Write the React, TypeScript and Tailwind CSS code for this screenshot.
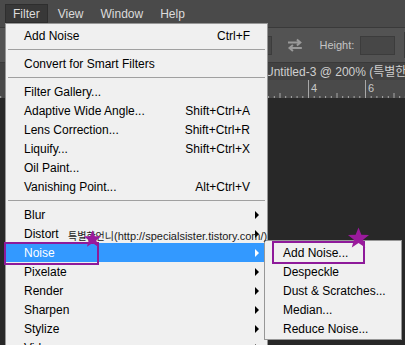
import React from "react";

type Item =
  | { sep: true }
  | { label: string; shortcut?: string; arrow?: boolean; hl?: boolean };

const mainItems: Item[] = [
  { label: "Add Noise", shortcut: "Ctrl+F" },
  { sep: true },
  { label: "Convert for Smart Filters" },
  { sep: true },
  { label: "Filter Gallery..." },
  { label: "Adaptive Wide Angle...", shortcut: "Shift+Ctrl+A" },
  { label: "Lens Correction...", shortcut: "Shift+Ctrl+R" },
  { label: "Liquify...", shortcut: "Shift+Ctrl+X" },
  { label: "Oil Paint..." },
  { label: "Vanishing Point...", shortcut: "Alt+Ctrl+V" },
  { sep: true },
  { label: "Blur", arrow: true },
  { label: "Distort", arrow: true },
  { label: "Noise", arrow: true, hl: true },
  { label: "Pixelate", arrow: true },
  { label: "Render", arrow: true },
  { label: "Sharpen", arrow: true },
  { label: "Stylize", arrow: true },
  { label: "Video", arrow: true },
];

const subItems = ["Add Noise...", "Despeckle", "Dust & Scratches...", "Median...", "Reduce Noise..."];

function Star({ size }: { size: number }) {
  return (
    <svg width={size} height={size} viewBox="0 0 24 24" className="blur-[0.4px]">
      <polygon
        points="12,1.5 15,9 23,9.3 16.8,14.3 19,22.5 12,17.8 5,22.5 7.2,14.3 1,9.3 9,9"
        fill="#9a1a9c"
      />
    </svg>
  );
}

function Ruler() {
  const ticks: React.ReactNode[] = [];
  const unit = 5.7;
  for (let i = -60; i < 30; i++) {
    const x = 308 + i * unit;
    if (x < 0 || x > 405) continue;
    const m = ((i % 10) + 10) % 10;
    let h = 2;
    if (m === 0) h = 18;
    else if (m === 5) h = 5;
    ticks.push(<line key={i} x1={x + 0.5} x2={x + 0.5} y1={18 - h} y2={18} stroke="#a8a8a8" strokeWidth={1} />);
  }
  return (
    <svg width={405} height={18} className="block">
      {ticks}
      <text x={311} y={12} fontSize={11} fill="#c8c8c8" fontFamily="Liberation Sans, sans-serif">4</text>
      <text x={368} y={12} fontSize={11} fill="#c8c8c8" fontFamily="Liberation Sans, sans-serif">6</text>
    </svg>
  );
}

export default function App() {
  return (
    <div className="relative w-[405px] h-[345px] overflow-hidden bg-[#282828] font-['Liberation_Sans','Noto_Sans_CJK_KR',sans-serif] text-[12px]">
      {/* Background application */}
      <div className="flex flex-col">
        {/* menubar */}
        <div className="h-[28px] bg-[#4a4a4a] flex pl-[5px] pt-[4px] gap-[3px] text-[#dcdcdc] border-b border-[#3a3a3a]">
          <div className="h-[19px] px-[7px] flex items-center bg-[#383838] border border-[#2e2e2e]">Filter</div>
          <div className="h-[19px] px-[7px] flex items-center">View</div>
          <div className="h-[19px] px-[7px] flex items-center">Window</div>
          <div className="h-[19px] px-[7px] flex items-center">Help</div>
        </div>
        {/* options bar */}
        <div className="h-[35px] bg-[#535353] flex items-center border-b border-[#3a3a3a]">
          <div className="ml-[230px] w-[42px] h-[19px] bg-[#474747] border border-[#3c3c3c]" />
          <svg width="16" height="14" viewBox="0 0 16 14" className="ml-[15px]">
            <path d="M1 4.5 H13 M10 1.5 L13.5 4.5 L10 7.5" stroke="#9a9a9a" strokeWidth="2" fill="none" />
            <path d="M15 10 H3 M6 7 L2.5 10 L6 13" stroke="#9a9a9a" strokeWidth="2" fill="none" />
          </svg>
          <span className="ml-[17px] text-[11px] text-[#c4c4c4]">Height:</span>
          <div className="ml-[6px] w-[35px] h-[19px] bg-[#474747] border border-[#3c3c3c]" />
          <div className="ml-[9px] w-px h-[26px] bg-[#3a3a3a]" />
        </div>
        {/* document tab */}
        <div className="h-[17px] bg-[#424242] flex items-center pl-[265px] text-[#cfcfcf] whitespace-nowrap">
          Untitled-3 @ 200% (특별한
        </div>
        {/* ruler */}
        <div className="h-[18px] bg-[#4a4a4a]">
          <Ruler />
        </div>
        <div className="flex-1 bg-[#282828]" />
      </div>

      {/* Main dropdown menu */}
      <div className="absolute left-[5px] top-[23px] w-[263px] h-[340px] bg-[#f0f0f0] border border-[#979797] pt-[2px] text-black">
        {mainItems.map((it, i) =>
          "sep" in it ? (
            <div key={i} className="h-[9px] flex items-center mx-[2px]">
              <div className="w-full h-px bg-[#a0a0a0]" />
            </div>
          ) : (
            <div
              key={i}
              className={
                "relative h-[19px] flex items-center pl-[18px] pr-[17px] " +
                (it.hl ? "bg-[#3399ff] text-white" : "")
              }
            >
              <span className="flex-1 whitespace-nowrap">{it.label}</span>
              {it.shortcut && <span className="whitespace-nowrap">{it.shortcut}</span>}
              {it.arrow && (
                <span
                  className={
                    "absolute right-[8px] top-[6px] w-0 h-0 border-y-[4px] border-y-transparent border-l-[4px] " +
                    (it.hl ? "border-l-white" : "border-l-black")
                  }
                />
              )}
            </div>
          )
        )}
      </div>

      {/* Submenu */}
      <div className="absolute left-[264px] top-[240px] w-[138px] bg-[#f0f0f0] border border-[#979797] pt-[2px] pb-px text-black">
        {subItems.map((s) => (
          <div key={s} className="h-[19px] flex items-center pl-[18px] whitespace-nowrap">
            {s}
          </div>
        ))}
      </div>

      {/* Watermark */}
      <div className="absolute left-[68px] top-[229px] text-[11px] text-[#1a1a1a] whitespace-nowrap leading-[14px]">
        <span className="text-[10px] font-['Noto_Sans_CJK_KR',sans-serif]">특별한언니</span>(http://specialsister.tistory.com/)
      </div>

      {/* Annotations */}
      <div className="absolute left-[4px] top-[242px] w-[95px] h-[23px] border-2 border-[#8e1a9a]" />
      <div className="absolute left-[272px] top-[241px] w-[93px] h-[23px] border-2 border-[#8e1a9a]" />
      <div className="absolute left-[83px] top-[229px]">
        <Star size={19} />
      </div>
      <div className="absolute left-[347px] top-[226px]">
        <Star size={23} />
      </div>
    </div>
  );
}
